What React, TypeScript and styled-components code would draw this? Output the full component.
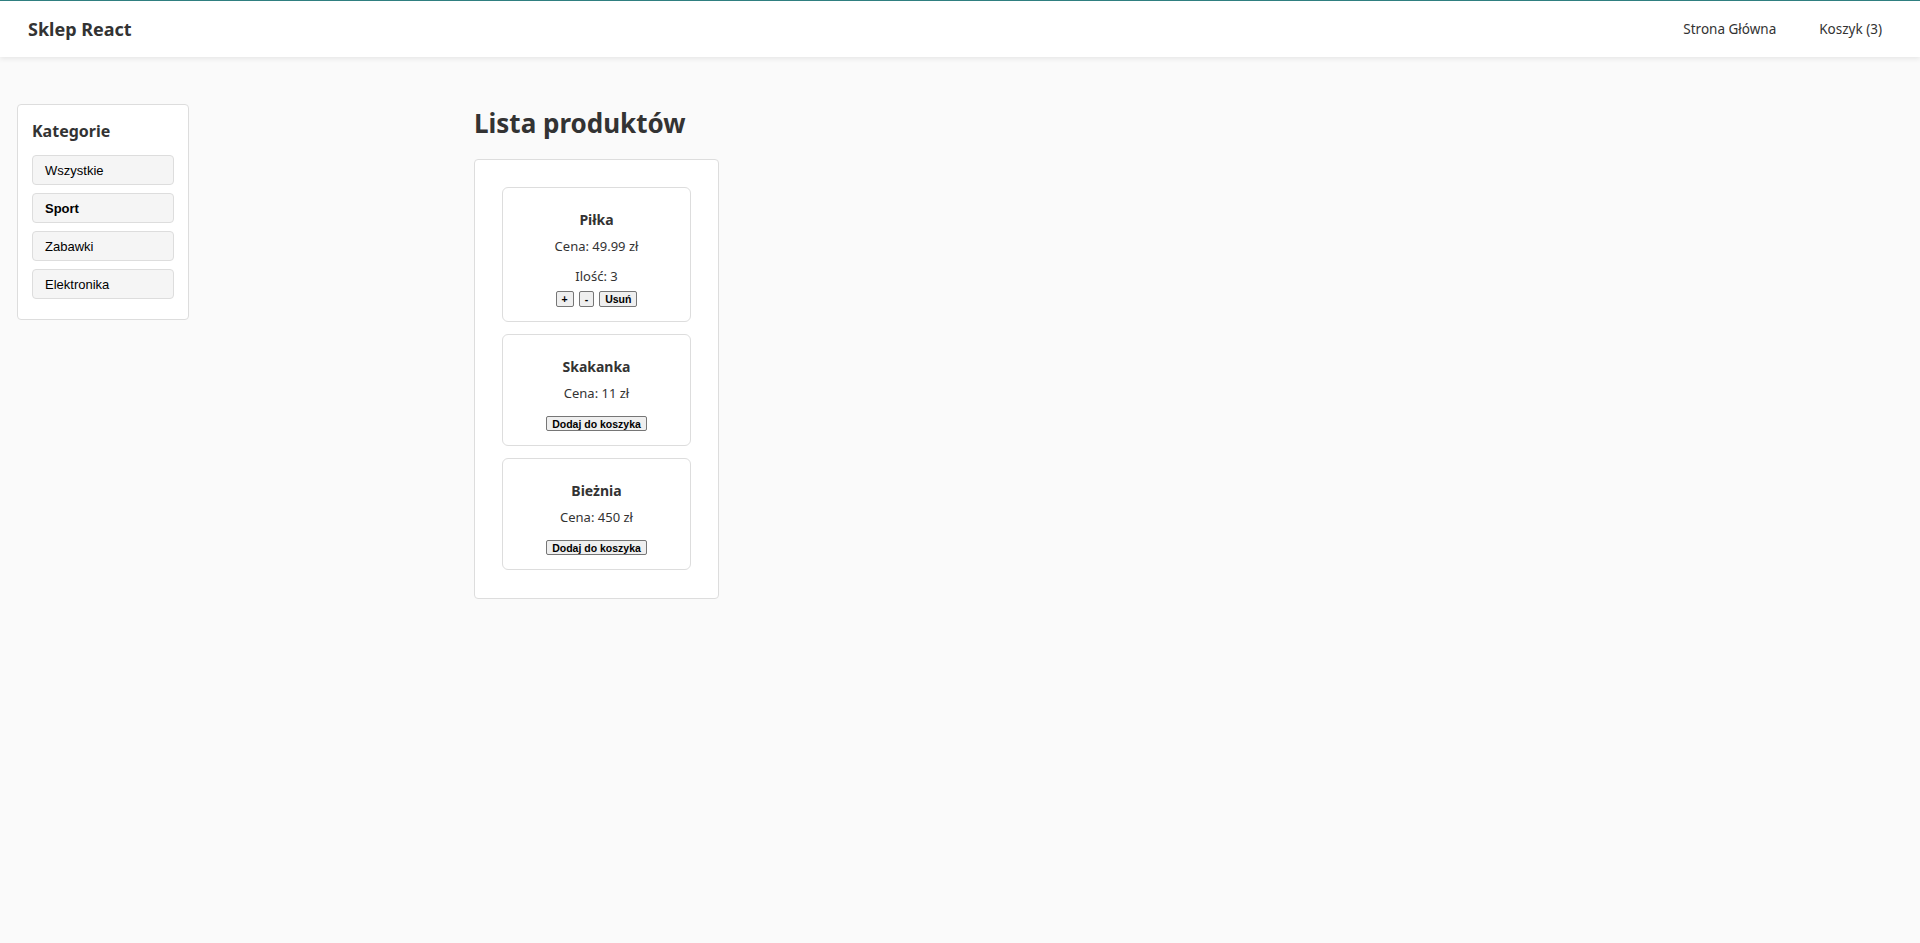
import React, { useState } from 'react';
import styled, { createGlobalStyle } from 'styled-components';

const GlobalStyle = createGlobalStyle`
  html, body {
    margin: 0;
    padding: 0;
    background: #fafafa;
  }
  body {
    font-family: 'Noto Sans', 'Open Sans', sans-serif;
    color: #333;
  }
`;

const Header = styled.header`
  height: 56px;
  border-top: 1px solid #2f7f80;
  background: #fff;
  box-shadow: 0 2px 5px rgba(0, 0, 0, 0.08);
  display: flex;
  align-items: center;
  justify-content: space-between;
  padding: 0 38px 0 28px;
`;

const Logo = styled.div`
  font-size: 18px;
  font-weight: 700;
  color: #333;
`;

const Nav = styled.nav`
  display: flex;
  gap: 43px;
`;

const NavLink = styled.a`
  font-size: 13.5px;
  color: #333;
  text-decoration: none;
  cursor: pointer;
`;

const Layout = styled.div`
  display: grid;
  grid-template-columns: 172px 1fr;
  column-gap: 285px;
  align-items: start;
  padding: 47px 17px;
`;

const Sidebar = styled.aside`
  background: #fff;
  border: 1px solid #ddd;
  border-radius: 4px;
  padding: 14px 14px 12px;
`;

const SidebarTitle = styled.h3`
  margin: 0 0 12px;
  font-size: 16px;
  line-height: 24px;
  font-weight: 700;
  color: #333;
`;

const CategoryButton = styled.button<{ $active?: boolean }>`
  display: block;
  width: 100%;
  height: 30px;
  margin: 0 0 8px;
  padding: 0 12px;
  text-align: left;
  background: #f5f5f5;
  border: 1px solid #ddd;
  border-radius: 4px;
  font-family: 'Liberation Sans', Arial, sans-serif;
  font-size: 13px;
  font-weight: ${p => (p.$active ? 700 : 400)};
  color: #000;
  cursor: pointer;
`;

const Main = styled.main`
  display: flex;
  flex-direction: column;
  align-items: flex-start;
`;

const Title = styled.h1`
  margin: 2px 0 19px;
  font-size: 26px;
  line-height: 34px;
  font-weight: 700;
  color: #333;
`;

const ProductList = styled.div`
  width: 245px;
  box-sizing: border-box;
  background: #fff;
  border: 1px solid #ddd;
  border-radius: 4px;
  padding: 27px 27px 28px;
  display: flex;
  flex-direction: column;
  gap: 12px;
`;

const Card = styled.div`
  border: 1px solid #ddd;
  border-radius: 6px;
  padding: 22px 12px 14px;
  text-align: center;
  display: flex;
  flex-direction: column;
  align-items: center;
`;

const ProductName = styled.h4`
  margin: 0 0 6px;
  font-size: 14px;
  line-height: 20px;
  font-weight: 700;
  color: #333;
`;

const Line = styled.p<{ $after: number }>`
  margin: 0 0 ${p => p.$after}px;
  font-size: 13px;
  line-height: 20px;
  color: #333;
`;

const Actions = styled.div`
  display: flex;
  gap: 5px;
  justify-content: center;
`;

const SmallButton = styled.button<{ $tall?: boolean }>`
  height: ${p => (p.$tall ? 16 : 15)}px;
  padding: 0 5px;
  font-family: 'Liberation Sans', Arial, sans-serif;
  font-size: 10.5px;
  font-weight: 700;
  line-height: 12px;
  color: #000;
  background: #efefef;
  border: 1px solid #767676;
  border-radius: 2px;
  cursor: pointer;
`;

type Product = { id: number; name: string; price: string; qty?: number };

const products: Product[] = [
  { id: 1, name: 'Piłka', price: '49.99', qty: 3 },
  { id: 2, name: 'Skakanka', price: '11' },
  { id: 3, name: 'Bieżnia', price: '450' },
];

const categories = ['Wszystkie', 'Sport', 'Zabawki', 'Elektronika'];

const ProductCard = ({ product }: { product: Product }) => (
  <Card>
    <ProductName>{product.name}</ProductName>
    <Line $after={product.qty ? 10 : 13}>Cena: {product.price} zł</Line>
    {product.qty ? (
      <>
        <Line $after={5}>Ilość: {product.qty}</Line>
        <Actions>
          <SmallButton $tall>+</SmallButton>
          <SmallButton $tall>-</SmallButton>
          <SmallButton $tall>Usuń</SmallButton>
        </Actions>
      </>
    ) : (
      <SmallButton>Dodaj do koszyka</SmallButton>
    )}
  </Card>
);

const App = () => {
  const [active, setActive] = useState('Sport');

  return (
    <>
      <GlobalStyle />
      <Header>
        <Logo>Sklep React</Logo>
        <Nav>
          <NavLink>Strona Główna</NavLink>
          <NavLink>Koszyk (3)</NavLink>
        </Nav>
      </Header>
      <Layout>
        <Sidebar>
          <SidebarTitle>Kategorie</SidebarTitle>
          {categories.map(c => (
            <CategoryButton key={c} $active={c === active} onClick={() => setActive(c)}>
              {c}
            </CategoryButton>
          ))}
        </Sidebar>
        <Main>
          <Title>Lista produktów</Title>
          <ProductList>
            {products.map(p => (
              <ProductCard key={p.id} product={p} />
            ))}
          </ProductList>
        </Main>
      </Layout>
    </>
  );
};

export default App;
